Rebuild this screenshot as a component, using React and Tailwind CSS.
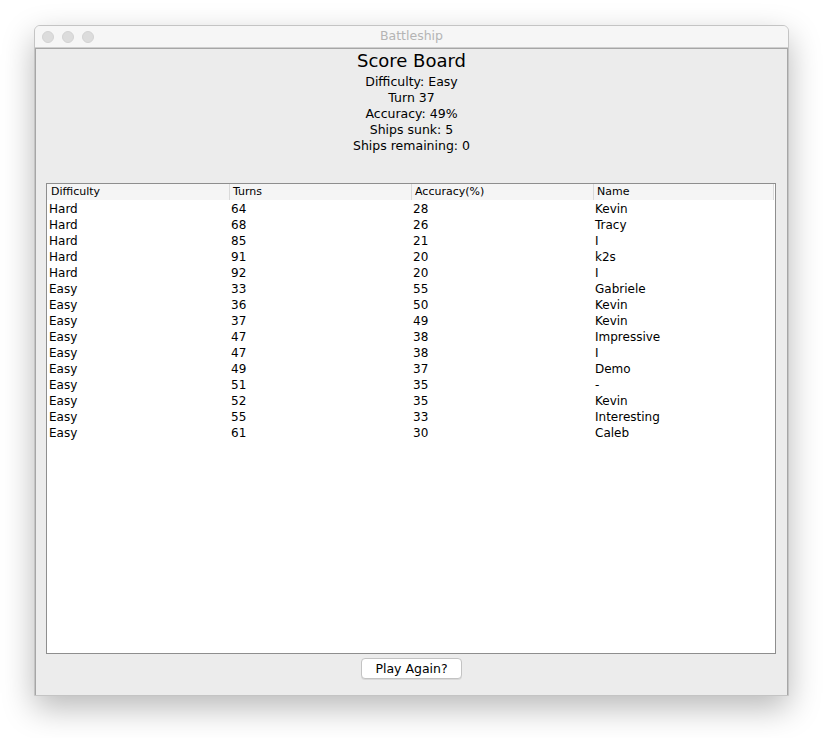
import React from "react";

const rows = [
  ["Hard", "64", "28", "Kevin"],
  ["Hard", "68", "26", "Tracy"],
  ["Hard", "85", "21", "I"],
  ["Hard", "91", "20", "k2s"],
  ["Hard", "92", "20", "I"],
  ["Easy", "33", "55", "Gabriele"],
  ["Easy", "36", "50", "Kevin"],
  ["Easy", "37", "49", "Kevin"],
  ["Easy", "47", "38", "Impressive"],
  ["Easy", "47", "38", "I"],
  ["Easy", "49", "37", "Demo"],
  ["Easy", "51", "35", "-"],
  ["Easy", "52", "35", "Kevin"],
  ["Easy", "55", "33", "Interesting"],
  ["Easy", "61", "30", "Caleb"],
];

const headers = ["Difficulty", "Turns", "Accuracy(%)", "Name"];

export default function App() {
  return (
    <div
      className="min-h-[738px] w-[823px] bg-white pt-[25px] pl-[34px]"
      style={{ fontFamily: '"DejaVu Sans", "Noto Sans", sans-serif' }}
    >
      <div className="flex h-[671px] w-[755px] flex-col overflow-hidden rounded-t-[6px] border border-[#c4c4c4] bg-[#ececec] shadow-[0_12px_32px_rgba(0,0,0,0.28)]">
        {/* title bar */}
        <div className="relative flex h-[22px] shrink-0 items-center border-b border-[#cfcfcf] bg-[#f6f6f6] pl-[7px]">
          <div className="flex gap-[8px]">
            <div className="h-[12px] w-[12px] rounded-full border border-[#d2d2d2] bg-[#dcdcdc]" />
            <div className="h-[12px] w-[12px] rounded-full border border-[#d2d2d2] bg-[#dcdcdc]" />
            <div className="h-[12px] w-[12px] rounded-full border border-[#d2d2d2] bg-[#dcdcdc]" />
          </div>
          <div className="absolute inset-0 flex items-center justify-center text-[12.5px] text-[#b4b4b4]">
            Battleship
          </div>
        </div>
        {/* content */}
        <div className="flex flex-1 flex-col border-x border-t border-[#a6a6a6] bg-[#ececec]">
          <div className="flex flex-col items-center pt-[1px] text-black">
            <div className="h-[24px] text-[18px] leading-[22px]">Score Board</div>
            <div className="h-[16px] text-[12.5px] leading-[16px]">Difficulty: Easy</div>
            <div className="h-[16px] text-[12.5px] leading-[16px]">Turn 37</div>
            <div className="h-[16px] text-[12.5px] leading-[16px]">Accuracy: 49%</div>
            <div className="h-[16px] text-[12.5px] leading-[16px]">Ships sunk: 5</div>
            <div className="h-[16px] text-[12.5px] leading-[16px]">Ships remaining: 0</div>
          </div>
          <div className="mt-[29px] ml-[10px] flex h-[471px] w-[730px] flex-col border border-[#8e8e8e] bg-white">
            <div className="flex h-[16px] w-[727px] bg-[#f5f5f5] text-[11px] leading-[16px] text-black">
              {headers.map((h, i) => (
                <div
                  key={h}
                  className={
                    i === 0
                      ? "w-[182px] pl-[4px]"
                      : i === 3
                      ? "w-[181px] border-l border-r border-[#dadada] pl-[3px]"
                      : "w-[182px] border-l border-[#dadada] pl-[3px]"
                  }
                >
                  {h}
                </div>
              ))}
            </div>
            <div className="flex flex-col pt-[1px] text-[12px] leading-[16px] text-black">
              {rows.map((r, idx) => (
                <div key={idx} className="flex h-[16px]">
                  {r.map((c, j) => (
                    <div key={j} className="w-[182px] pl-[2px]">
                      {c}
                    </div>
                  ))}
                </div>
              ))}
            </div>
          </div>
          <div className="mt-[4px] flex justify-center">
            <button className="h-[21px] w-[101px] rounded-[4px] border border-[#c3c3c3] bg-white text-[12.5px] leading-[19px] text-black shadow-[0_1px_0_rgba(0,0,0,0.08)]">
              Play Again?
            </button>
          </div>
        </div>
      </div>
    </div>
  );
}
